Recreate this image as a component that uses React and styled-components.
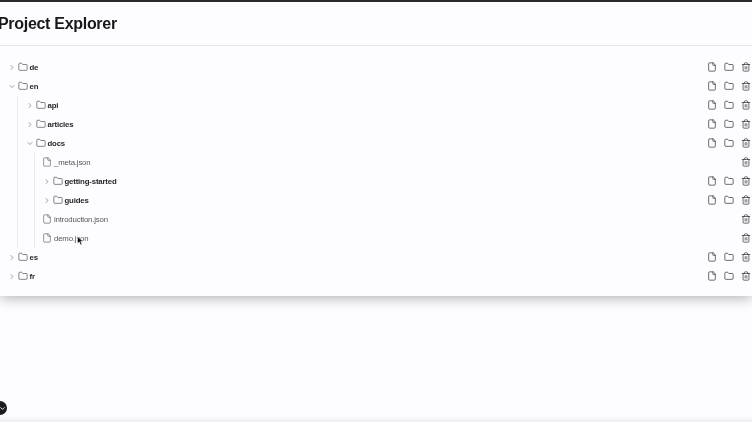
import React from 'react';
import styled, { createGlobalStyle } from 'styled-components';
import { ChevronDown, ChevronRight, File, Folder, Trash2 } from 'lucide-react';

const Global = createGlobalStyle`
html, body {
  margin: 0;
  padding: 0;
  background: #fdfcfe;
}
body {
  font-family: "Liberation Sans", Arial, sans-serif;
  overflow: hidden;
}
`

const Page = styled.div`
position: relative;
width: 752px;
height: 422px;
overflow: hidden;
background: #fdfcfe;
`

const Panel = styled.section`
height: 296px;
border-top: 2px solid #2b2b2d;
box-sizing: border-box;
background: #fdfcfe;
box-shadow: 0 2px 12px rgba(0,0,0,.3);
`

const Header = styled.header`
height: 44px;
display: flex;
align-items: center;
box-sizing: border-box;
border-bottom: 1px solid #e6e5e8;
`

const Title = styled.h1`
margin: 0 0 0 -2px;
font-size: 16px;
font-weight: 700;
letter-spacing: -0.3px;
color: #18181b;
white-space: nowrap;
will-change: opacity;
`

const Tree = styled.div`
padding-top: 11.5px;
`

const Row = styled.div`
height: 19px;
display: flex;
align-items: center;
justify-content: space-between;
padding-right: 1px;
`

const Label = styled.div`
display: flex;
align-items: center;
padding-left: ${p => p.$left}px;
`

const Name = styled.span`
font-size: 7.8px;
line-height: 19px;
letter-spacing: -0.17px;
white-space: nowrap;
font-weight: ${p => (p.$file ? 400 : 700)};
color: ${p => (p.$file ? '#55555c' : '#27272a')};
margin-left: ${p => (p.$file ? 2 : 1.5)}px;
will-change: opacity;
`

const Toggle = styled.span`
width: 8px;
display: flex;
justify-content: center;
margin-right: 2px;
color: #4a4a50;
`

const Actions = styled.div`
display: flex;
align-items: center;
justify-content: flex-end;
gap: 7px;
color: #323236;
`

const Nested = styled.div`
margin-left: 17px;
border-left: 1px solid #ebeaed;
& & {
  margin-left: 16px;
}
`

const Cursor = styled.svg`
position: absolute;
left: 77px;
top: 236px;
`

const Badge = styled.div`
position: absolute;
left: -7px;
top: 401px;
width: 14px;
height: 14px;
border-radius: 50%;
background: #1d1d20;
display: flex;
align-items: center;
justify-content: flex-end;
padding-right: 1px;
box-sizing: border-box;
color: #fff;
`

const BottomEdge = styled.div`
position: absolute;
left: 0;
right: 0;
bottom: 0;
height: 6px;
background: linear-gradient(to bottom, rgba(0,0,0,0), rgba(0,0,0,.06));
`

const tree = [
  { name: 'de' },
  {
    name: 'en',
    children: [
      { name: 'api' },
      { name: 'articles' },
      {
        name: 'docs',
        children: [
          { name: '_meta.json', file: true },
          { name: 'getting-started' },
          { name: 'guides' },
          { name: 'introduction.json', file: true },
          { name: 'demo.json', file: true },
        ],
      },
    ],
  },
  { name: 'es' },
  { name: 'fr' },
];

const iconProps = { size: 10, strokeWidth: 1.7 };

const Node = ({ node }) => {
  const open = !!node.children;
  return (
    <>
      <Row>
        <Label $left={node.file ? 7 : 8}>
          {node.file ? (
            <File size={10} strokeWidth={1.5} color="#55555c" />
          ) : (
            <>
              <Toggle>
                {open ? <ChevronDown size={11} strokeWidth={1.6} /> : <ChevronRight size={11} strokeWidth={1.6} />}
              </Toggle>
              <Folder size={10} strokeWidth={1.5} color="#3f3f45" />
            </>
          )}
          <Name $file={node.file}>{node.name}</Name>
        </Label>
        <Actions>
          {!node.file && <File {...iconProps} />}
          {!node.file && <Folder {...iconProps} />}
          <Trash2 {...iconProps} />
        </Actions>
      </Row>
      {open && (
        <Nested>
          {node.children.map(c => <Node key={c.name} node={c} />)}
        </Nested>
      )}
    </>
  );
};

const App = () => {
  return (
    <Page>
      <Global />
      <Panel>
        <Header>
          <Title>Project Explorer</Title>
        </Header>
        <Tree>
          {tree.map(n => <Node key={n.name} node={n} />)}
        </Tree>
      </Panel>
      <Cursor width="7" height="10" viewBox="0 0 7 10">
        <path d="M0.5 0.5 L0.5 7.5 L2.3 6 L3.6 9 L5 8.4 L3.7 5.5 L6 5.4 Z" fill="#111" stroke="#fff" strokeWidth="0.5" />
      </Cursor>
      <Badge>
        <ChevronDown size={7} strokeWidth={3} />
      </Badge>
      <BottomEdge />
    </Page>
  );
}

export default App;
